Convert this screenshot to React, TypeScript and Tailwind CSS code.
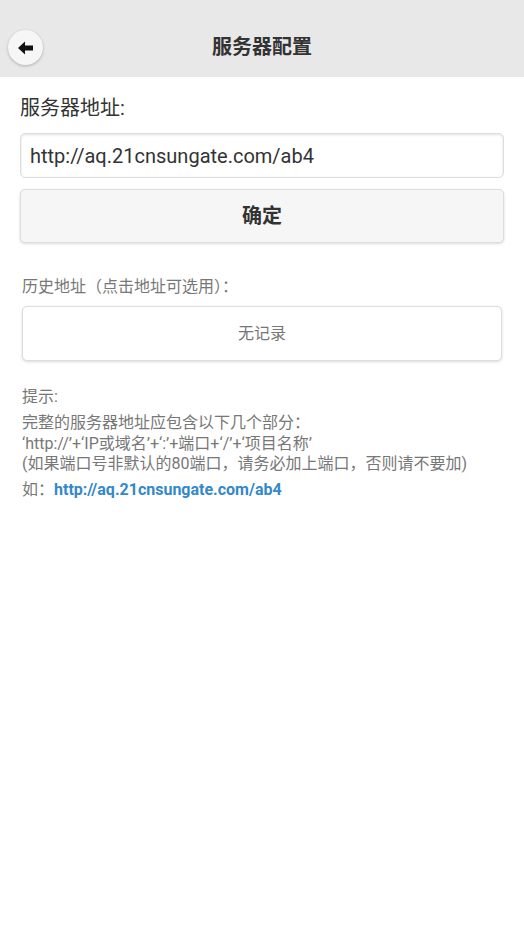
import React, { useState } from 'react';

const font = { fontFamily: "Roboto, 'Noto Sans CJK SC', sans-serif" };

export default function App() {
  const [url, setUrl] = useState('http://aq.21cnsungate.com/ab4');

  return (
    <div className="min-h-[930px] w-full bg-white text-[#333]" style={font}>
      <header className="relative flex h-[77px] items-end justify-center bg-[#e8e8e8] pb-[16px]">
        <button className="absolute left-[8px] top-[30px] flex h-[35px] w-[35px] items-center justify-center rounded-full bg-[#f6f6f6] shadow-[0_1px_3px_rgba(0,0,0,0.25)]">
          <svg width="16" height="14" viewBox="0 0 16 14">
            <path d="M0 7 L7 0.5 L7 4.5 L15 4.5 L15 9.5 L7 9.5 L7 13.5 Z" fill="#111" />
          </svg>
        </button>
        <h1 className="text-[20px] font-bold leading-[28px] text-[#333]">服务器配置</h1>
      </header>

      <main className="flex flex-col px-5">
        <label className="mt-[19px] text-[20px] leading-6 text-[#333]">服务器地址:</label>
        <input
          value={url}
          onChange={(e) => setUrl(e.target.value)}
          className="mt-[13px] h-[45px] w-full rounded-[5px] border border-[#ddd] bg-white px-[9px] text-[20px] text-[#333] shadow-[inset_0_1px_3px_rgba(0,0,0,0.12)] outline-none"
          style={font}
        />
        <button className="mt-[11px] h-[54px] w-full rounded-[5px] border border-[#ddd] bg-[#f6f6f6] text-[20px] font-bold text-[#333] shadow-[0_1px_3px_rgba(0,0,0,0.15)]">
          确定
        </button>

        <p className="mt-[34px] px-[2px] text-[16px] leading-5 text-[#777]">历史地址（点击地址可选用）：</p>
        <div className="mx-[2px] mt-[9px] flex h-[55px] items-center justify-center rounded-[5px] border border-[#ddd] bg-white text-[16px] text-[#777] shadow-[0_1px_3px_rgba(0,0,0,0.15)]">
          无记录
        </div>

        <div className="mt-[26px] px-[2px] text-[16px] text-[#777]">
          <p className="leading-5">提示:</p>
          <p className="mt-[6px] leading-[20.5px]">
            完整的服务器地址应包含以下几个部分：
            <br />
            ‘http://’+‘IP或域名’+‘:’+端口+‘/’+‘项目名称’
            <br />
            (如果端口号非默认的80端口，请务必加上端口，否则请不要加)
          </p>
          <p className="mt-[4px] text-[16px] leading-[22px]">
            如：<span className="font-bold text-[#3388cc]">http://aq.21cnsungate.com/ab4</span>
          </p>
        </div>
      </main>
    </div>
  );
}
